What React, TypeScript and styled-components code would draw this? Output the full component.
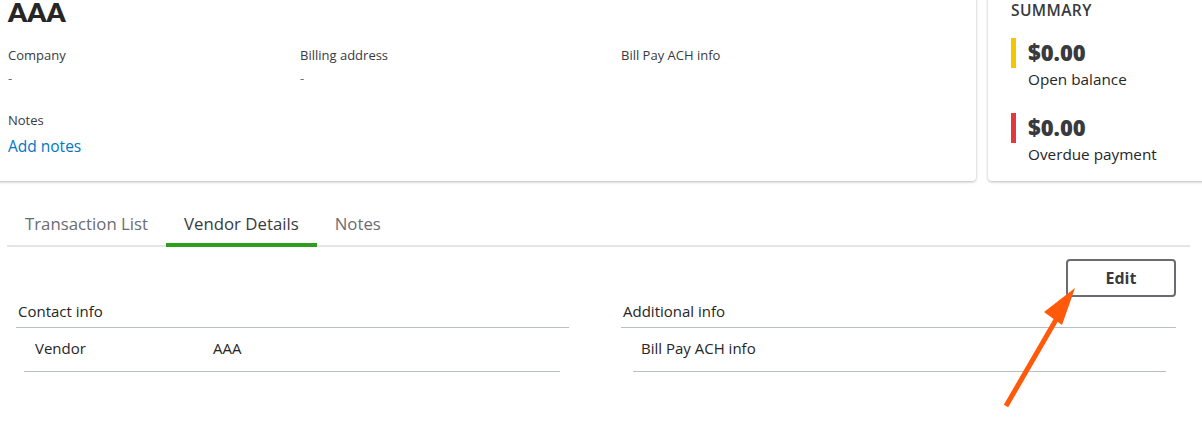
import React from "react";
import styled, { createGlobalStyle } from "styled-components";

const Global = createGlobalStyle`
  html, body { margin: 0; padding: 0; background: #ffffff; }
  body { font-family: "Open Sans", Lato, "Liberation Sans", sans-serif; color: #393a3d; width: 1202px; height: 422px; overflow: hidden; }
  * { box-sizing: border-box; }
`;

const Page = styled.div`
  position: relative;
  width: 1202px;
  height: 422px;
`;

const TopRow = styled.div`
  display: flex;
  gap: 12px;
  margin-top: -12px;
  margin-left: -10px;
`;

const Card = styled.div<{ $width: number }>`
  background: #fff;
  width: ${(p) => p.$width}px;
  height: 193px;
  border-radius: 4px;
  box-shadow: 0 1px 3px rgba(0, 0, 0, 0.28);
  flex-shrink: 0;
`;

const MainCard = styled(Card)`
  padding: 8px 0 0 18px;
`;

const Title = styled.h1`
  margin: 0;
  font-family: Lato, "Open Sans", sans-serif;
  font-size: 27px;
  font-weight: 800;
  line-height: 32px;
  color: #262626;
`;

const FieldGrid = styled.div`
  display: grid;
  grid-template-columns: 292px 321px 300px;
  margin-top: 18px;
`;

const Field = styled.div`
  display: flex;
  flex-direction: column;
`;

const FieldLabel = styled.div`
  font-size: 13px;
  line-height: 18px;
  color: #393a3d;
`;

const FieldValue = styled.div`
  font-size: 13px;
  line-height: 18px;
  color: #6b6c72;
  margin-top: 5px;
`;

const NotesBlock = styled.div`
  margin-top: 24px;
`;

const AddNotes = styled.a`
  display: block;
  margin-top: 7px;
  font-size: 15.5px;
  line-height: 20px;
  color: #0077c5;
  text-decoration: none;
`;

const SummaryCard = styled(Card)`
  padding: 12px 0 0 23px;
`;

const SummaryHead = styled.div`
  font-size: 15.5px;
  font-weight: 600;
  letter-spacing: 0.4px;
  color: #393a3d;
  line-height: 20px;
`;

const Metric = styled.div<{ $first?: boolean }>`
  display: flex;
  gap: 12px;
  margin-top: ${(p) => (p.$first ? "18px" : "24px")};
`;

const Bar = styled.div<{ $color: string }>`
  width: 5px;
  height: 30px;
  background: ${(p) => p.$color};
  flex-shrink: 0;
`;

const MetricBody = styled.div`
  display: flex;
  flex-direction: column;
`;

const Amount = styled.div`
  font-size: 22px;
  font-weight: 800;
  line-height: 28px;
  color: #393a3d;
`;

const MetricLabel = styled.div`
  font-size: 15.3px;
  line-height: 20px;
  color: #262626;
  margin-top: 3px;
`;

const Tabs = styled.div`
  display: flex;
  margin: 27px 12px 0 7px;
  border-bottom: 2px solid #e4e5e8;
`;

const Tab = styled.div<{ $active?: boolean }>`
  padding: 5px 18px 0;
  font-size: 16.8px;
  line-height: 22px;
  height: 39px;
  color: ${(p) => (p.$active ? "#393a3d" : "#6b6c72")};
  border-bottom: 4px solid ${(p) => (p.$active ? "#2ca01c" : "transparent")};
  margin-bottom: -2px;
`;

const Content = styled.div`
  padding: 12px 26px 0 16px;
`;

const ButtonRow = styled.div`
  display: flex;
  justify-content: flex-end;
`;

const EditButton = styled.button`
  width: 110px;
  height: 38px;
  border: 2px solid #6b6c72;
  border-radius: 4px;
  background: #fff;
  font-family: inherit;
  font-size: 16px;
  font-weight: 700;
  color: #393a3d;
`;

const Columns = styled.div`
  display: flex;
  justify-content: space-between;
  margin-top: 4px;
`;

const Column = styled.div<{ $width: number }>`
  width: ${(p) => p.$width}px;
`;

const ColumnHead = styled.div`
  font-size: 15px;
  line-height: 20px;
  padding: 0 2px 6px;
  border-bottom: 1px solid #babec5;
  color: #262626;
`;

const InfoRow = styled.div<{ $inset: string; $pad: number }>`
  display: flex;
  margin: ${(p) => p.$inset};
  height: 44px;
  align-items: center;
  padding: 0 ${(p) => p.$pad}px 3px;
  border-bottom: 1px solid #babec5;
  font-size: 15px;
  color: #262626;
`;

const InfoLabel = styled.div`
  width: 178px;
`;

const Arrow = styled.svg`
  position: absolute;
  left: 990px;
  top: 290px;
  pointer-events: none;
`;

export default function App() {
  return (
    <Page>
      <Global />
      <TopRow>
        <MainCard $width={986}>
          <Title>AAA</Title>
          <FieldGrid>
            <Field>
              <FieldLabel>Company</FieldLabel>
              <FieldValue>-</FieldValue>
            </Field>
            <Field>
              <FieldLabel>Billing address</FieldLabel>
              <FieldValue>-</FieldValue>
            </Field>
            <Field>
              <FieldLabel>Bill Pay ACH info</FieldLabel>
            </Field>
          </FieldGrid>
          <NotesBlock>
            <FieldLabel>Notes</FieldLabel>
            <AddNotes href="#">Add notes</AddNotes>
          </NotesBlock>
        </MainCard>
        <SummaryCard $width={240}>
          <SummaryHead>SUMMARY</SummaryHead>
          <Metric $first>
            <Bar $color="#f5c500" />
            <MetricBody>
              <Amount>$0.00</Amount>
              <MetricLabel>Open balance</MetricLabel>
            </MetricBody>
          </Metric>
          <Metric>
            <Bar $color="#e03a3e" />
            <MetricBody>
              <Amount>$0.00</Amount>
              <MetricLabel>Overdue payment</MetricLabel>
            </MetricBody>
          </Metric>
        </SummaryCard>
      </TopRow>
      <Tabs>
        <Tab>Transaction List</Tab>
        <Tab $active>Vendor Details</Tab>
        <Tab>Notes</Tab>
      </Tabs>
      <Content>
        <ButtonRow>
          <EditButton>Edit</EditButton>
        </ButtonRow>
        <Columns>
          <Column $width={553}>
            <ColumnHead>Contact info</ColumnHead>
            <InfoRow $inset="0 9px 0 8px" $pad={11}>
              <InfoLabel>Vendor</InfoLabel>
              <div>AAA</div>
            </InfoRow>
          </Column>
          <Column $width={555}>
            <ColumnHead>Additional info</ColumnHead>
            <InfoRow $inset="0 10px 0 12px" $pad={8}>
              <InfoLabel>Bill Pay ACH info</InfoLabel>
            </InfoRow>
          </Column>
        </Columns>
      </Content>
      <Arrow width="100" height="132" viewBox="0 0 100 132">
        <line x1="16" y1="128" x2="74" y2="28" stroke="#fe5a0a" strokeWidth="5" />
        <polygon points="85,10 72,47 54,34" fill="#fe5a0a" />
      </Arrow>
    </Page>
  );
}
